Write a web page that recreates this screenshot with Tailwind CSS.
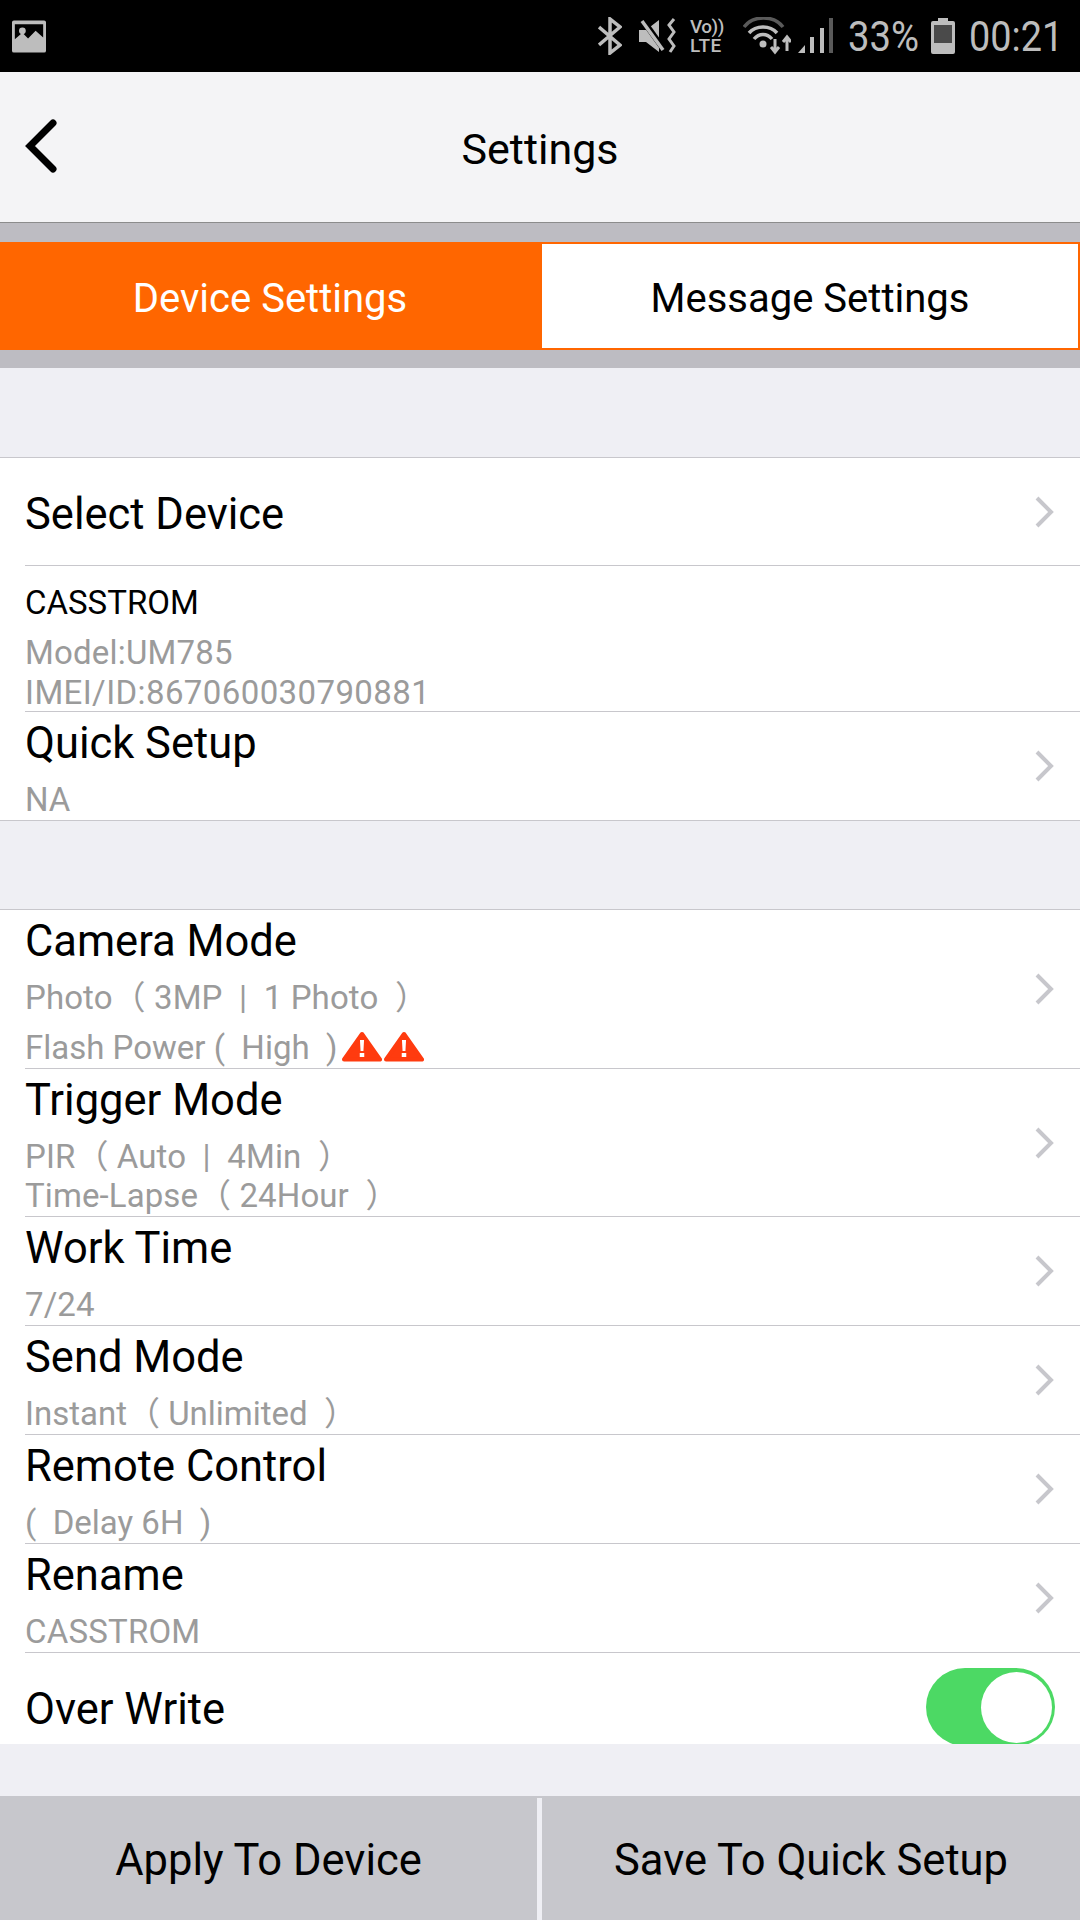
<!DOCTYPE html>
<html lang="en">
<head>
    <meta charset="UTF-8">
    <meta name="viewport" content="width=device-width, initial-scale=1.0">
    <title>Settings</title>
    <script src="https://cdn.jsdelivr.net/npm/@tailwindcss/browser@4"></script>
</head>
<body class="bg-[#efeff4] font-['Roboto','Noto_Sans_CJK_SC',sans-serif]">
<div class="w-[1080px] h-[1920px] flex flex-col overflow-hidden">

    <!-- Status bar -->
    <div class="h-[72px] bg-black flex items-center justify-between pl-[12px] pr-[20px] text-[#bdbdbd] shrink-0">
        <svg class="w-[34px] h-[33px]" viewBox="0 0 36 34">
            <path fill-rule="evenodd" fill="#bdbdbd" d="M2 0h32a2 2 0 0 1 2 2v30a2 2 0 0 1-2 2H2a2 2 0 0 1-2-2V2a2 2 0 0 1 2-2zM3 4v16l8-7 6 6 8-8 8 7V4z"/>
            <circle cx="11" cy="11" r="3.6" fill="#bdbdbd"/>
        </svg>
        <div class="flex items-center">
            <svg class="w-[24px] h-[38px] mr-[17px]" viewBox="0 0 24 38" fill="none" stroke="#bdbdbd" stroke-width="3.5">
                <path d="M1 10l21 18-10 8V2l10 8L1 28"/>
            </svg>
            <svg class="w-[38px] h-[36px] mr-[13px]" viewBox="0 0 38 36">
                <path fill="#bdbdbd" d="M0 12h7L20 2v32L7 24H0z"/>
                <path d="M3 1l23 32" stroke="#000" stroke-width="6"/>
                <path d="M3 3l21 29" stroke="#bdbdbd" stroke-width="3.5"/>
                <path d="M35 1l-5 6 5 7-5 7 5 7-4 6" fill="none" stroke="#bdbdbd" stroke-width="3"/>
            </svg>
            <div class="w-[37px] mr-[16px] flex flex-col items-start text-[19px] font-medium whitespace-nowrap">
                <span class="leading-[19px] tracking-[-0.5px]">Vo))</span>
                <span class="leading-[19px] tracking-[0.5px]">LTE</span>
            </div>
            <svg class="w-[48px] h-[38px] mr-[7px]" viewBox="0 0 48 38" fill="none" stroke-width="3.5">
                <path d="M1 10C10 -2 31 -2 40 10" stroke="#5a5a5a"/>
                <path d="M6 16C13 8 27 8 34 16" stroke="#bdbdbd"/>
                <path d="M11 22C16 16 24 16 29 22" stroke="#bdbdbd"/>
                <circle cx="20" cy="27" r="3.500" fill="#bdbdbd" stroke="none"/>
                <path d="M32 22v13M28 30l4 5 4-5" stroke="#bdbdbd" stroke-width="3"/>
                <path d="M44 34V20M40 25l4-5 4 5" stroke="#bdbdbd" stroke-width="3"/>
            </svg>
            <svg class="w-[35px] h-[36px]" viewBox="0 0 35 36">
                <path fill="#bdbdbd" d="M0 35l7-8v8z"/>
                <path fill="#bdbdbd" d="M12 19h4v16h-4zM22 10h4v25h-4z"/>
                <path fill="#5a5a5a" d="M31 0h4v35h-4z"/>
            </svg>
            <span class="ml-[15px] w-[70px] text-[43px] leading-none scale-x-[.89] origin-left whitespace-nowrap">33%</span>
            <svg class="w-[24px] h-[36px] ml-[13px]" viewBox="0 0 24 36">
                <path fill="#bdbdbd" d="M7 0h10v3h5a2 2 0 0 1 2 2v29a2 2 0 0 1-2 2H2a2 2 0 0 1-2-2V5a2 2 0 0 1 2-2h5z"/>
                <path fill="#4a4a4a" d="M3 7h18v18H3z"/>
            </svg>
            <span class="ml-[14px] w-[91px] text-[43px] leading-none scale-x-[.88] origin-left whitespace-nowrap">00:21</span>
        </div>
    </div>

    <!-- Nav bar -->
    <div class="relative h-[151px] bg-[#f4f4f6] border-b border-[#8c8c8c] flex items-center justify-center pt-[5px] shrink-0">
        <svg class="absolute left-[24px] top-[47px] w-[34px] h-[54px]" viewBox="0 0 34 54" fill="none" stroke="#000" stroke-width="7" stroke-linecap="round" stroke-linejoin="miter">
            <path d="M29 4L6 27l23 23"/>
        </svg>
        <h1 class="text-[43px] text-black leading-none">Settings</h1>
    </div>

    <!-- Tabs -->
    <div class="bg-[#bdbcc2] pt-[19px] pb-[18px] shrink-0">
        <div class="h-[108px] flex border border-[#ff6600] text-[40px]">
            <div class="w-[541px] bg-[#ff6600] text-white flex items-center justify-center pt-[5px] pr-[3px]">Device Settings</div>
            <div class="flex-1 bg-white text-black flex items-center justify-center pt-[5px] border-t border-b border-r border-[#ff6600]">Message Settings</div>
        </div>
    </div>

    <div class="h-[90px] border-b border-[#c8c7cc] shrink-0"></div>

    <!-- Device group -->
    <div class="bg-white border-b border-[#c8c7cc] shrink-0">
        <div class="h-[108px] ml-[25px] border-b border-[#c8c7cc] flex items-center justify-between pr-[25px]">
            <span class="text-[43.500px] text-black pt-[7px]">Select Device</span>
            <svg class="w-[20px] h-[32px]" viewBox="0 0 20 32" fill="none" stroke="#c7c7cc" stroke-width="4"><path d="M2 2l14 14L2 30"/></svg>
        </div>
        <div class="h-[146px] ml-[25px] border-b border-[#c8c7cc] pt-[19px]">
            <div class="text-[33px] leading-[36px] text-black">CASSTROM</div>
            <div class="text-[33px] leading-[40px] text-[#9b9b9b] mt-[12px] tracking-[0.2px]">Model:UM785</div>
            <div class="text-[33px] leading-[40px] text-[#9b9b9b] tracking-[0.4px] whitespace-nowrap">IMEI/ID:867060030790881</div>
        </div>
        <div class="h-[108px] ml-[25px] flex items-center justify-between pr-[25px]">
            <div class="self-start pt-[9px]">
                <div class="text-[43.500px] leading-[46px] text-black">Quick Setup</div>
                <div class="text-[33px] leading-[36px] text-[#9b9b9b] mt-[15px]">NA</div>
            </div>
            <svg class="w-[20px] h-[32px]" viewBox="0 0 20 32" fill="none" stroke="#c7c7cc" stroke-width="4"><path d="M2 2l14 14L2 30"/></svg>
        </div>
    </div>

    <div class="h-[89px] border-b border-[#c8c7cc] shrink-0"></div>

    <!-- Camera group -->
    <div class="bg-white shrink-0">
        <div class="h-[159px] ml-[25px] border-b border-[#c8c7cc] flex items-center justify-between pr-[25px]">
            <div class="self-start pt-[9px]">
                <div class="text-[43.500px] leading-[46px] text-black">Camera Mode</div>
                <div class="text-[33px] leading-[36px] text-[#9b9b9b] mt-[15px] tracking-[0.1px] whitespace-pre">Photo（ 3MP  |  1 Photo  ）</div>
                <div class="text-[33px] leading-[36px] text-[#9b9b9b] mt-[14px] flex items-center">
                    <span class="whitespace-pre">Flash Power (  High  )</span>
                    <svg class="w-[40px] h-[31px] ml-[4px] -mt-[4px]" viewBox="0 0 39 31" preserveAspectRatio="none"><path fill="#ff3b0f" stroke="#ff3b0f" stroke-width="4" stroke-linejoin="round" d="M19.500 3L37 28.500H2z"/><path fill="#fff" d="M17.500 9h4l-.6 11h-2.800zM17.300 22h4.400v4h-4.400z"/></svg>
                    <svg class="w-[40px] h-[31px] ml-[2px] -mt-[4px]" viewBox="0 0 39 31" preserveAspectRatio="none"><path fill="#ff3b0f" stroke="#ff3b0f" stroke-width="4" stroke-linejoin="round" d="M19.500 3L37 28.500H2z"/><path fill="#fff" d="M17.500 9h4l-.6 11h-2.800zM17.300 22h4.400v4h-4.400z"/></svg>
                </div>
            </div>
            <svg class="w-[20px] h-[32px]" viewBox="0 0 20 32" fill="none" stroke="#c7c7cc" stroke-width="4"><path d="M2 2l14 14L2 30"/></svg>
        </div>
        <div class="h-[148px] ml-[25px] border-b border-[#c8c7cc] flex items-center justify-between pr-[25px]">
            <div class="self-start pt-[9px]">
                <div class="text-[43.500px] leading-[46px] text-black">Trigger Mode</div>
                <div class="text-[33px] leading-[36px] text-[#9b9b9b] mt-[15px] tracking-[0.1px] whitespace-pre">PIR（ Auto  |  4Min  ）</div>
                <div class="text-[33px] leading-[36px] text-[#9b9b9b] mt-[3px] tracking-[0.1px] whitespace-pre">Time-Lapse（ 24Hour  ）</div>
            </div>
            <svg class="w-[20px] h-[32px]" viewBox="0 0 20 32" fill="none" stroke="#c7c7cc" stroke-width="4"><path d="M2 2l14 14L2 30"/></svg>
        </div>
        <div class="h-[109px] ml-[25px] border-b border-[#c8c7cc] flex items-center justify-between pr-[25px]">
            <div class="self-start pt-[9px]">
                <div class="text-[43.500px] leading-[46px] text-black">Work Time</div>
                <div class="text-[33px] leading-[36px] text-[#9b9b9b] mt-[15px] tracking-[0.1px]">7/24</div>
            </div>
            <svg class="w-[20px] h-[32px]" viewBox="0 0 20 32" fill="none" stroke="#c7c7cc" stroke-width="4"><path d="M2 2l14 14L2 30"/></svg>
        </div>
        <div class="h-[109px] ml-[25px] border-b border-[#c8c7cc] flex items-center justify-between pr-[25px]">
            <div class="self-start pt-[9px]">
                <div class="text-[43.500px] leading-[46px] text-black">Send Mode</div>
                <div class="text-[33px] leading-[36px] text-[#9b9b9b] mt-[15px] whitespace-pre">Instant（ Unlimited  ）</div>
            </div>
            <svg class="w-[20px] h-[32px]" viewBox="0 0 20 32" fill="none" stroke="#c7c7cc" stroke-width="4"><path d="M2 2l14 14L2 30"/></svg>
        </div>
        <div class="h-[109px] ml-[25px] border-b border-[#c8c7cc] flex items-center justify-between pr-[25px]">
            <div class="self-start pt-[9px]">
                <div class="text-[43.500px] leading-[46px] text-black">Remote Control</div>
                <div class="text-[33px] leading-[36px] text-[#9b9b9b] mt-[15px] whitespace-pre">(  Delay 6H  )</div>
            </div>
            <svg class="w-[20px] h-[32px]" viewBox="0 0 20 32" fill="none" stroke="#c7c7cc" stroke-width="4"><path d="M2 2l14 14L2 30"/></svg>
        </div>
        <div class="h-[109px] ml-[25px] border-b border-[#c8c7cc] flex items-center justify-between pr-[25px]">
            <div class="self-start pt-[9px]">
                <div class="text-[43.500px] leading-[46px] text-black">Rename</div>
                <div class="text-[33px] leading-[36px] text-[#9b9b9b] mt-[15px] tracking-[0.2px]">CASSTROM</div>
            </div>
            <svg class="w-[20px] h-[32px]" viewBox="0 0 20 32" fill="none" stroke="#c7c7cc" stroke-width="4"><path d="M2 2l14 14L2 30"/></svg>
        </div>
        <div class="h-[91px] ml-[25px] flex justify-between pr-[25px] overflow-hidden">
            <span class="text-[43.500px] leading-[46px] text-black mt-[34px]">Over Write</span>
            <div class="w-[129px] h-[78px] mt-[15px] rounded-full bg-[#4cd964] relative shrink-0">
                <div class="absolute right-[3px] top-[4px] w-[71px] h-[71px] rounded-full bg-white"></div>
            </div>
        </div>
    </div>

    <div class="h-[52px] shrink-0"></div>

    <!-- Bottom buttons -->
    <div class="h-[124px] flex justify-between text-[43.500px] text-black border-t-2 border-[#c7c7cc] shrink-0">
        <div class="w-[537px] bg-[#c7c7cc] flex items-center justify-center pt-[3px]">Apply To Device</div>
        <div class="w-[538px] bg-[#c7c7cc] flex items-center justify-center pt-[3px]">Save To Quick Setup</div>
    </div>
</div>
</body>
</html>
